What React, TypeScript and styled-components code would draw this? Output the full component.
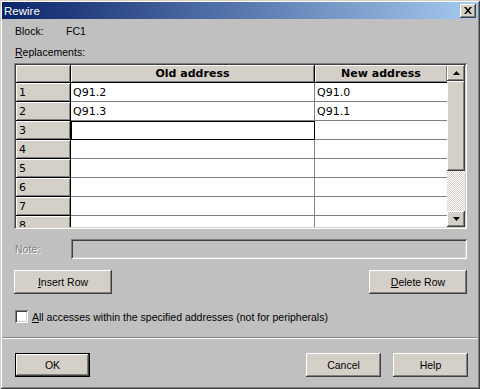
import React from 'react';
import styled, { createGlobalStyle } from 'styled-components';

const GlobalStyle = createGlobalStyle`
  html, body {
    margin: 0;
    padding: 0;
    width: 480px;
    height: 389px;
    overflow: hidden;
    background: #c0c0c0;
  }
  * {
    box-sizing: border-box;
  }
`;

const face = '#d4d0c8';
const dialogBg = '#c0c0c0';

const Window = styled.div`
  width: 480px;
  height: 389px;
  padding: 2px;
  display: flex;
  flex-direction: column;
  background: ${dialogBg};
  box-shadow: inset 1px 1px ${face}, inset -1px -1px #404040, inset 2px 2px #fff,
    inset -2px -2px #808080;
  font-family: 'Liberation Sans', Arial, sans-serif;
  font-size: 10.5px;
  color: #000;
`;

const TitleBar = styled.div`
  height: 17px;
  display: flex;
  align-items: center;
  justify-content: space-between;
  padding: 0 2px 0 2px;
  background: linear-gradient(to right, #0a246a, #a6caf0);
  color: #fff;
  font-size: 11.5px;
`;

const CloseButton = styled.div`
  width: 16px;
  height: 14px;
  display: flex;
  align-items: center;
  justify-content: center;
  background: ${face};
  box-shadow: inset -1px -1px #404040, inset 1px 1px #fff, inset -2px -2px #808080;
`;

const Content = styled.div`
  display: flex;
  flex-direction: column;
  padding: 0 11px 0 12px;
`;

const InfoRow = styled.div`
  display: flex;
  margin-top: 6px;
  height: 13px;
  line-height: 13px;
  padding-left: 1px;
`;

const InfoLabel = styled.span`
  width: 51px;
`;

const Caption = styled.div<{ $disabled?: boolean }>`
  height: 13px;
  line-height: 13px;
  padding-left: 1px;
  color: ${({ $disabled }) => ($disabled ? '#808080' : '#000')};
  text-shadow: ${({ $disabled }) => ($disabled ? '1px 1px 0 #fff' : 'none')};
`;

const SectionLabel = styled(Caption)`
  margin-top: 8px;
`;

const GridFrame = styled.div`
  margin-top: 4px;
  height: 166px;
  padding: 2px;
  display: flex;
  background: #fff;
  box-shadow: inset 1px 1px #808080, inset -1px -1px #fff, inset 2px 2px #404040,
    inset -2px -2px ${face};
`;

const TableArea = styled.div`
  flex: 1;
  overflow: hidden;
  display: grid;
  grid-template-columns: 55px 244px 133px;
  grid-template-rows: 18px;
  grid-auto-rows: 19px;
  align-content: start;
  font-family: 'DejaVu Sans', Verdana, sans-serif;
  font-size: 11px;
`;

const HeadCell = styled.div<{ $center?: boolean }>`
  background: ${face};
  border-right: 1px solid #000;
  border-bottom: 1px solid #000;
  box-shadow: inset 1px 1px #fff, inset -1px -1px #808080;
  display: flex;
  align-items: center;
  justify-content: ${({ $center }) => ($center ? 'center' : 'flex-start')};
  padding-left: ${({ $center }) => ($center ? '0' : '3px')};
  font-weight: ${({ $center }) => ($center ? 'bold' : 'normal')};
  line-height: 1;
`;

const DataCell = styled.div<{ $focused?: boolean }>`
  background: #fff;
  border-right: 1px solid ${({ $focused }) => ($focused ? '#000' : '#808080')};
  border-bottom: 1px solid ${({ $focused }) => ($focused ? '#000' : '#808080')};
  box-shadow: ${({ $focused }) => ($focused ? 'inset 1px 1px #000' : 'none')};
  display: flex;
  align-items: center;
  padding-left: 2px;
  line-height: 1;
`;

const ScrollBar = styled.div`
  width: 18px;
  display: flex;
  flex-direction: column;
`;

const ScrollButton = styled.div`
  height: 16px;
  display: flex;
  align-items: center;
  justify-content: center;
  background: ${face};
  box-shadow: inset -1px -1px #404040, inset 1px 1px #fff, inset -2px -2px #808080;
`;

const Thumb = styled.div`
  height: 90px;
  background: ${face};
  box-shadow: inset -1px -1px #404040, inset 1px 1px #fff, inset -2px -2px #808080;
`;

const Track = styled.div`
  flex: 1;
  background-color: #fff;
  background-image: repeating-conic-gradient(${face} 0 25%, #fff 0 50%);
  background-size: 2px 2px;
`;

const NoteRow = styled.div`
  margin-top: 10px;
  height: 20px;
  display: flex;
  align-items: center;
`;

const NoteLabel = styled(Caption)`
  width: 57px;
`;

const NoteField = styled.div`
  flex: 1;
  height: 20px;
  background: ${dialogBg};
  box-shadow: inset 1px 1px #808080, inset -1px -1px #fff, inset 2px 2px #404040,
    inset -2px -2px ${face};
`;

const ButtonRow = styled.div`
  margin-top: 11px;
  display: flex;
  justify-content: space-between;
`;

const Button = styled.div<{ $width: number; $default?: boolean }>`
  width: ${({ $width }) => $width}px;
  height: 24px;
  display: flex;
  align-items: center;
  justify-content: center;
  background: ${face};
  border: ${({ $default }) => ($default ? '1px solid #000' : 'none')};
  box-shadow: inset -1px -1px #404040, inset 1px 1px #fff, inset -2px -2px #808080;
`;

const CheckRow = styled.div`
  margin-top: 16px;
  display: flex;
  align-items: center;
  height: 13px;
  padding-left: 1px;
`;

const CheckBox = styled.div`
  width: 13px;
  height: 13px;
  margin-right: 4px;
  background: #fff;
  box-shadow: inset 1px 1px #808080, inset -1px -1px #fff, inset 2px 2px #404040,
    inset -2px -2px ${face};
`;

const Separator = styled.div`
  margin-top: 14px;
  height: 2px;
  border-top: 1px solid #808080;
  border-bottom: 1px solid #fff;
`;

const Footer = styled.div`
  margin-top: 14px;
  display: flex;
  padding: 0 10px 0 13px;
  gap: 12px;
`;

const Spacer = styled.div`
  flex: 1;
`;

const Mn = styled.span`
  text-decoration: underline;
`;

const UpArrow = () => (
  <svg width="7" height="4" viewBox="0 0 7 4">
    <path d="M3.5 0 L7 4 L0 4 Z" fill="#000" />
  </svg>
);

const DownArrow = () => (
  <svg width="7" height="4" viewBox="0 0 7 4">
    <path d="M0 0 L7 0 L3.5 4 Z" fill="#000" />
  </svg>
);

const rows = [
  { oldAddr: 'Q91.2', newAddr: 'Q91.0' },
  { oldAddr: 'Q91.3', newAddr: 'Q91.1' },
  { oldAddr: '', newAddr: '' },
  { oldAddr: '', newAddr: '' },
  { oldAddr: '', newAddr: '' },
  { oldAddr: '', newAddr: '' },
  { oldAddr: '', newAddr: '' },
  { oldAddr: '', newAddr: '' },
  { oldAddr: '', newAddr: '' },
];

export default function App() {
  return (
    <>
      <GlobalStyle />
      <Window>
        <TitleBar>
          <span>Rewire</span>
          <CloseButton>
            <svg width="8" height="7" viewBox="0 0 8 7">
              <path d="M0 0 L2 0 L4 2.2 L6 0 L8 0 L5 3.5 L8 7 L6 7 L4 4.8 L2 7 L0 7 L3 3.5 Z" fill="#000" />
            </svg>
          </CloseButton>
        </TitleBar>
        <Content>
          <InfoRow>
            <InfoLabel>Block:</InfoLabel>
            <span>FC1</span>
          </InfoRow>
          <SectionLabel>
            <Mn>R</Mn>eplacements:
          </SectionLabel>
          <GridFrame>
            <TableArea>
              <HeadCell />
              <HeadCell $center>Old address</HeadCell>
              <HeadCell $center>New address</HeadCell>
              {rows.map((r, i) => (
                <React.Fragment key={i}>
                  <HeadCell>{i + 1}</HeadCell>
                  <DataCell $focused={i === 2}>{r.oldAddr}</DataCell>
                  <DataCell>{r.newAddr}</DataCell>
                </React.Fragment>
              ))}
            </TableArea>
            <ScrollBar>
              <ScrollButton>
                <UpArrow />
              </ScrollButton>
              <Thumb />
              <Track />
              <ScrollButton>
                <DownArrow />
              </ScrollButton>
            </ScrollBar>
          </GridFrame>
          <NoteRow>
            <NoteLabel $disabled>Note:</NoteLabel>
            <NoteField />
          </NoteRow>
          <ButtonRow>
            <Button $width={98}>
              <span>
                <Mn>I</Mn>nsert Row
              </span>
            </Button>
            <Button $width={98}>
              <span>
                <Mn>D</Mn>elete Row
              </span>
            </Button>
          </ButtonRow>
          <CheckRow>
            <CheckBox />
            <span>
              <Mn>A</Mn>ll accesses within the specified addresses (not for peripherals)
            </span>
          </CheckRow>
        </Content>
        <Separator />
        <Footer>
          <Button $width={75} $default>
            OK
          </Button>
          <Spacer />
          <Button $width={75}>Cancel</Button>
          <Button $width={75}>Help</Button>
        </Footer>
      </Window>
    </>
  );
}
